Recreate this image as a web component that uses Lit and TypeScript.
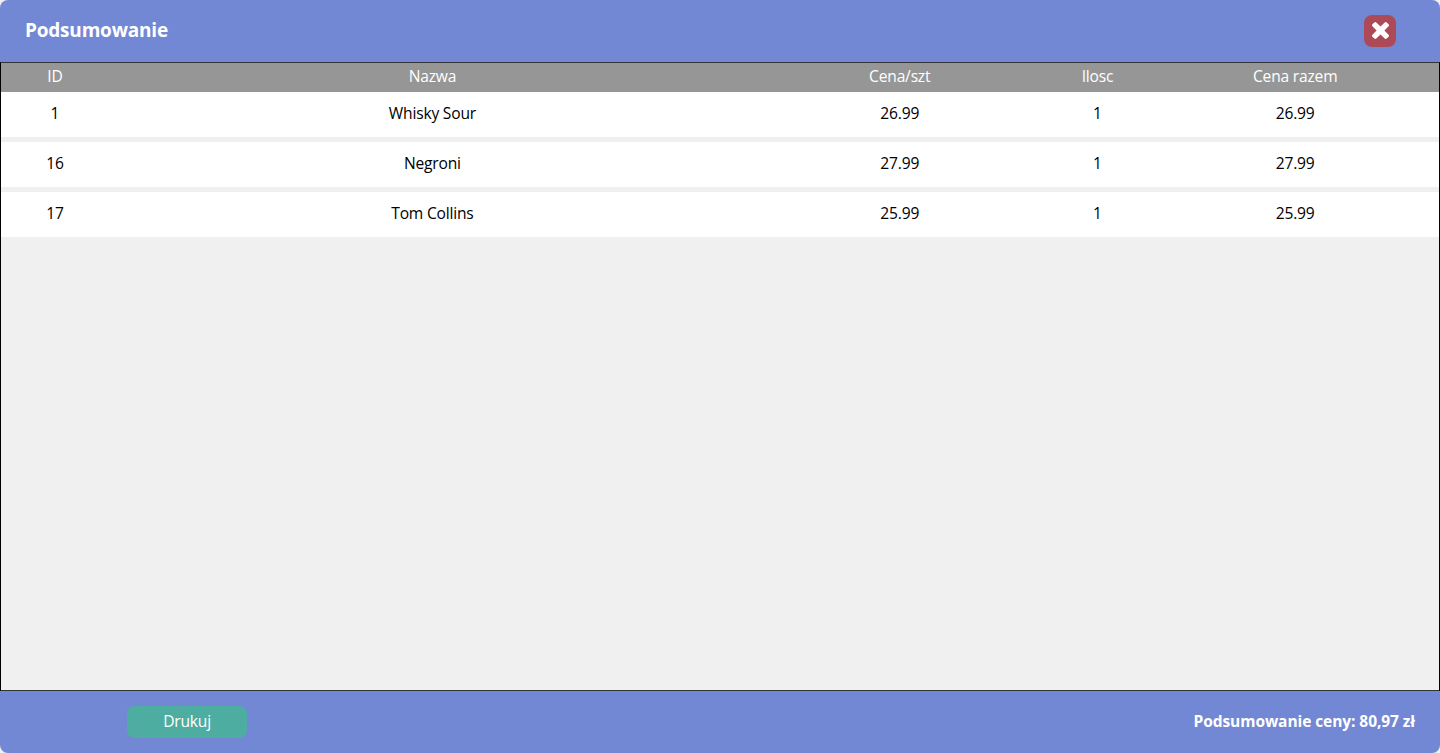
import { LitElement, html, css } from "lit";
import { customElement } from "lit/decorators.js";

interface Item {
  id: number;
  name: string;
  price: string;
  count: number;
  total: string;
}

const ITEMS: Item[] = [
  { id: 1, name: "Whisky Sour", price: "26.99", count: 1, total: "26.99" },
  { id: 16, name: "Negroni", price: "27.99", count: 1, total: "27.99" },
  { id: 17, name: "Tom Collins", price: "25.99", count: 1, total: "25.99" },
];

@customElement("app-root")
export class AppRoot extends LitElement {
  static styles = css`
    :host {
      display: block;
      height: 100vh;
      background: #f0f0f0;
      font-family: "Segoe UI", "Open Sans", "Noto Sans", sans-serif;
      font-size: 15.6px;
      letter-spacing: -0.2px;
      color: #000;
    }
    .window {
      display: flex;
      flex-direction: column;
      height: 100%;
      border-radius: 8px;
      overflow: hidden;
    }
    header,
    footer {
      box-sizing: border-box;
      flex: none;
      height: 62px;
      display: flex;
      align-items: center;
      justify-content: space-between;
      background: #7388d4;
      color: #fff;
    }
    header {
      padding: 0 44px 0 25px;
    }
    footer {
      padding: 0 25px 0 127px;
    }
    h1 {
      margin: 0;
      font-size: 19px;
      line-height: 26px;
      font-weight: 700;
      padding-bottom: 2px;
    }
    button {
      box-sizing: border-box;
      display: flex;
      align-items: center;
      justify-content: center;
      height: 32px;
      margin: 0;
      padding: 0 0 2px;
      border: 0;
      border-radius: 8px;
      color: #fff;
      font: inherit;
      letter-spacing: inherit;
    }
    .close {
      width: 32px;
      padding: 0 0 1px;
      background: #ad4a58;
    }
    .close svg {
      width: 17px;
      height: 17px;
      fill: #fff;
    }
    .print {
      width: 120px;
      background: #4dada1;
    }
    .sum {
      font-size: 15.5px;
      letter-spacing: -0.07px;
      font-weight: 700;
      padding-bottom: 2px;
    }
    main {
      flex: 1;
      min-height: 0;
      box-sizing: border-box;
      border: 1px solid #000;
      border-top-color: #333;
      border-bottom-color: #333;
      background: #f0f0f0;
    }
    .row {
      box-sizing: border-box;
      display: grid;
      grid-template-columns: 7.5% 45% 20% 7.5% 20%;
      align-items: center;
      text-align: center;
      height: 45px;
      line-height: 21px;
      padding-bottom: 3px;
      margin-bottom: 5px;
      background: #fff;
    }
    .head {
      height: 29px;
      margin: 0;
      background: #969696;
      color: #fff;
    }
  `;

  render() {
    return html`
      <div class="window">
        <header>
          <h1>Podsumowanie</h1>
          <button class="close" aria-label="Zamknij">
            <svg viewBox="302 366 1188 1188">
              <path
                d="M1490 1322q0 40-28 68l-136 136q-28 28-68 28t-68-28l-294-294-294 294q-28 28-68 28t-68-28l-136-136q-28-28-28-68t28-68l294-294-294-294q-28-28-28-68t28-68l136-136q28-28 68-28t68 28l294 294 294-294q28-28 68-28t68 28l136 136q28 28 28 68t-28 68l-294 294 294 294q28 28 28 68z"
              />
            </svg>
          </button>
        </header>
        <main>
          <div class="row head">
            <span>ID</span><span>Nazwa</span><span>Cena/szt</span><span>Ilosc</span><span>Cena razem</span>
          </div>
          ${ITEMS.map(
            (i) => html`<div class="row">
              <span>${i.id}</span><span>${i.name}</span><span>${i.price}</span><span>${i.count}</span><span>${i.total}</span>
            </div>`
          )}
        </main>
        <footer>
          <button class="print">Drukuj</button>
          <span class="sum">Podsumowanie ceny: 80,97 zł</span>
        </footer>
      </div>
    `;
  }
}
